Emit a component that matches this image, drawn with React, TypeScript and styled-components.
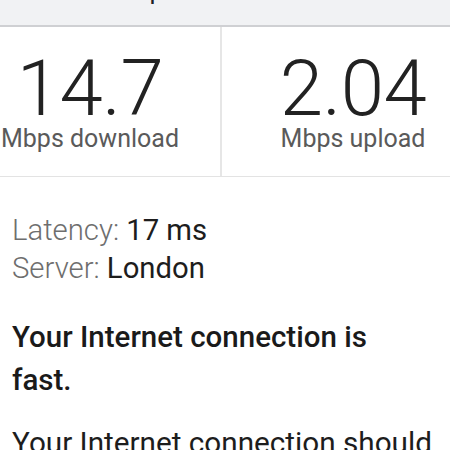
import React from "react";
import styled, { createGlobalStyle } from "styled-components";

const Global = createGlobalStyle`
  html, body { margin: 0; padding: 0; background: #ffffff; }
  body {
    width: 450px;
    height: 450px;
    overflow: hidden;
    font-family: Roboto, "Liberation Sans", Arial, sans-serif;
    color: #202124;
  }
`;

const Page = styled.div`
  width: 450px;
  height: 450px;
  overflow: hidden;
  display: flex;
  flex-direction: column;
`;

const Header = styled.header`
  height: 25px;
  flex: none;
  background: #f1f2f4;
  border-bottom: 2px solid #cfd0d3;
  overflow: hidden;
  padding-left: 134px;
`;

const Title = styled.h1`
  margin: -23px 0 0;
  font-size: 26px;
  line-height: 26px;
  font-weight: 400;
  color: #202124;
  white-space: nowrap;
`;

const Stats = styled.section`
  flex: none;
  display: grid;
  grid-template-columns: 262px 262px;
  margin-left: -40px;
  border-bottom: 1px solid #e3e3e3;
`;

const Stat = styled.div<{ $divider?: boolean }>`
  box-sizing: border-box;
  display: flex;
  flex-direction: column;
  align-items: center;
  padding: 27px 0 24px;
  border-right: ${(p) => (p.$divider ? "2px solid #e6e6e6" : "none")};
`;

const Value = styled.div`
  font-size: 78px;
  line-height: 70px;
  font-weight: 300;
  color: #222222;
  letter-spacing: -0.5px;
`;

const Unit = styled.div`
  margin-top: 2px;
  font-size: 25px;
  line-height: 26px;
  font-weight: 400;
  color: #5a5a5a;
`;

const Details = styled.section`
  padding: 35px 12px 0;
`;

const DetailRow = styled.div`
  font-size: 29.3px;
  line-height: 37.5px;
  white-space: nowrap;
`;

const DetailLabel = styled.span`
  font-weight: 300;
  color: #6e6e6e;
`;

const DetailValue = styled.span`
  font-weight: 400;
  color: #1d1d1d;
`;

const Verdict = styled.h2`
  margin: 29px 12px 0;
  font-size: 29.5px;
  line-height: 43px;
  font-weight: 500;
  color: #1a1a1a;
  width: 400px;
`;

const Body = styled.p`
  margin: 19px 12px 0;
  font-size: 29.7px;
  line-height: 43px;
  font-weight: 400;
  color: #1d1d1d;
  white-space: nowrap;
`;

export default function App() {
  return (
    <>
      <Global />
      <Page>
        <Header>
          <Title>Speed test</Title>
        </Header>
        <Stats>
          <Stat $divider>
            <Value>14.7</Value>
            <Unit>Mbps download</Unit>
          </Stat>
          <Stat>
            <Value>2.04</Value>
            <Unit>Mbps upload</Unit>
          </Stat>
        </Stats>
        <Details>
          <DetailRow>
            <DetailLabel>Latency: </DetailLabel>
            <DetailValue>17 ms</DetailValue>
          </DetailRow>
          <DetailRow>
            <DetailLabel>Server: </DetailLabel>
            <DetailValue>London</DetailValue>
          </DetailRow>
        </Details>
        <Verdict>Your Internet connection is fast.</Verdict>
        <Body>Your Internet connection should</Body>
      </Page>
    </>
  );
}
